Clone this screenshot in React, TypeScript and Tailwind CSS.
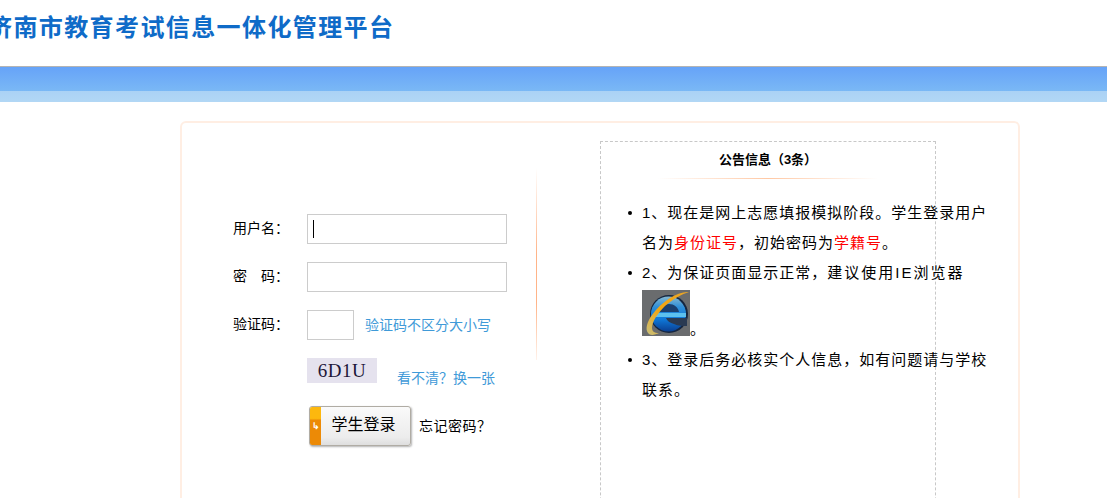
const CJK = "font-['Liberation_Sans','Noto_Sans_CJK_SC',sans-serif]";

function IeLogo() {
  return (
    <svg width="48" height="46" viewBox="0 0 48 46" className="block">
      <defs>
        <linearGradient id="ball" x1="0" y1="0" x2="0" y2="1">
          <stop offset="0" stopColor="#86b8d0" />
          <stop offset="0.3" stopColor="#2f8fd8" />
          <stop offset="0.65" stopColor="#0f78d8" />
          <stop offset="1" stopColor="#0a3f92" />
        </linearGradient>
        <linearGradient id="ring" x1="0" y1="1" x2="1" y2="0">
          <stop offset="0" stopColor="#c8c07c" />
          <stop offset="0.45" stopColor="#f2a50f" />
          <stop offset="1" stopColor="#e8a52a" />
        </linearGradient>
      </defs>
      <rect width="48" height="46" fill="#6a6c6e" />
      <circle cx="27" cy="24" r="19" fill="#16263f" />
      <circle cx="26.5" cy="24" r="17.5" fill="url(#ball)" />
      <path d="M17 22 C18 17 22 14 27 14 C32 14 36 17 37 22 Z" fill="#1b3f6e" />
      <path d="M14 23 L44 23 L44 27 L14 27 Z" fill="#5cc0ee" />
      <path d="M24 28 L45 28 L45 36 C41 36 36 36 32 34 C28 33 25 31 24 28 Z" fill="#2a3a52" />
      <path d="M47 2 C36 1 20 11 10 25 C5 32 3 39 6 43 C8 46 13 45 17 43 C12 43 10 41 10 38 C10 32 15 24 23 16 C31 9 40 4 47 2 Z" fill="url(#ring)" />
    </svg>
  );
}

function Row({ label, children, className = "" }: { label: string; children: React.ReactNode; className?: string }) {
  return (
    <div className={`flex items-center ${className}`}>
      <span className="w-[74px] whitespace-pre pb-[2px] text-[14px] leading-[28px] text-black">{label}</span>
      {children}
    </div>
  );
}

function Dot() {
  return <span className="absolute -left-[14px] top-[13px] h-[4px] w-[4px] rounded-full bg-black" />;
}

export default function App() {
  return (
    <div className={`h-[498px] w-[1107px] overflow-hidden bg-white ${CJK}`}>
      <header className="h-[66px] overflow-hidden">
        <h1 className="-ml-[12px] whitespace-nowrap pt-[13px] text-[24px] font-bold leading-[30px] tracking-[1.4px] text-[#0f6bc8]">
          济南市教育考试信息一体化管理平台
        </h1>
      </header>
      <div className="h-[36px] border-t border-[#b4b4b4] bg-[linear-gradient(#66a3f8_0%,#7ab8f5_68%,#abd2f5_70%,#b2d7f5_100%)]" />

      <main className="ml-[180px] mt-[19px] flex h-[500px] w-[840px] rounded-[6px] border-2 border-[#ffeee3]">
        <section className="w-[354px] pl-[51px] pt-[91px]">
          <Row label="用户名：">
            <div className="relative">
              <input className="block h-[30px] w-[200px] border border-[#cccccc] bg-white outline-none" />
              <span className="absolute left-[6px] top-[6px] h-[18px] w-px bg-black" />
            </div>
          </Row>
          <Row label="密　码：" className="mt-[18px]">
            <input type="password" className="block h-[30px] w-[200px] border border-[#cccccc] bg-white outline-none" />
          </Row>
          <Row label="验证码：" className="mt-[18px]">
            <input className="block h-[30px] w-[47px] border border-[#cccccc] bg-white outline-none" />
            <span className="ml-[11px] text-[14px] text-[#3f9ad8]">验证码不区分大小写</span>
          </Row>
          <div className="ml-[74px] mt-[18px] flex items-start">
            <div className="flex h-[25px] w-[70px] items-center justify-center bg-[#e5e2ee] font-['Liberation_Serif',serif] text-[19px] leading-none tracking-[0.5px] text-[#1d1638]">
              6D1U
            </div>
            <a className="ml-[20px] mt-[10px] text-[14px] leading-[20px] text-[#3f9ad8]">看不清？换一张</a>
          </div>
          <div className="ml-[76px] mt-[18px] flex items-center">
            <button className="flex h-[40px] w-[102px] overflow-hidden rounded-[3px] border border-[#b0aca4] bg-[linear-gradient(#fafafa,#ececec_80%,#dedede)] shadow-[1px_1px_2px_rgba(0,0,0,0.3)]">
              <span className="flex h-full w-[11px] items-center justify-center bg-[linear-gradient(#fdb80e_0%,#fdb80e_30%,#ec8a06_35%,#ec8a06_100%)] text-[9px] font-bold leading-none text-white">
                ↳
              </span>
              <span className="flex-1 pr-[4px] text-[16px] leading-[36px] text-black">学生登录</span>
            </button>
            <span className="ml-[8px] text-[14px] tracking-[0.5px] text-black">忘记密码？</span>
          </div>
        </section>

        <div className="mt-[45px] h-[192px] w-px bg-[linear-gradient(rgba(255,170,120,0),#ffb488_45%,#ffb488_70%,rgba(255,170,120,0.15))]" />

        <aside className="ml-[63px] mt-[18px] h-[500px] w-[336px] border border-dashed border-[#c8c8c8]">
          <h2 className="pt-[8px] text-center text-[13px] font-bold leading-[20px] text-black">公告信息（3条）</h2>
          <div className="mx-auto mt-[8px] h-px w-[220px] bg-[linear-gradient(to_right,rgba(255,190,150,0),#ffc8a4_50%,rgba(255,190,150,0))]" />
          <ul className="mt-[19px] w-[400px] list-none whitespace-nowrap pl-[41px] text-[15px] leading-[30px] tracking-[1px] text-black">
            <li className="relative">
              <Dot />
              1、现在是网上志愿填报模拟阶段。学生登录用户
              <br />
              名为<span className="text-[#ff0000]">身份证号</span>，初始密码为<span className="text-[#ff0000]">学籍号</span>。
            </li>
            <li className="relative">
              <Dot />
              2、为保证页面显示正常，<span className="tracking-[2px]">建议使用IE浏览器</span>
              <div className="mt-[2px] flex items-end">
                <IeLogo />
                <span className="leading-[14px]">。</span>
              </div>
            </li>
            <li className="relative mt-[9px]">
              <Dot />
              3、登录后务必核实个人信息，如有问题请与学校
              <br />
              联系。
            </li>
          </ul>
        </aside>
      </main>
    </div>
  );
}
